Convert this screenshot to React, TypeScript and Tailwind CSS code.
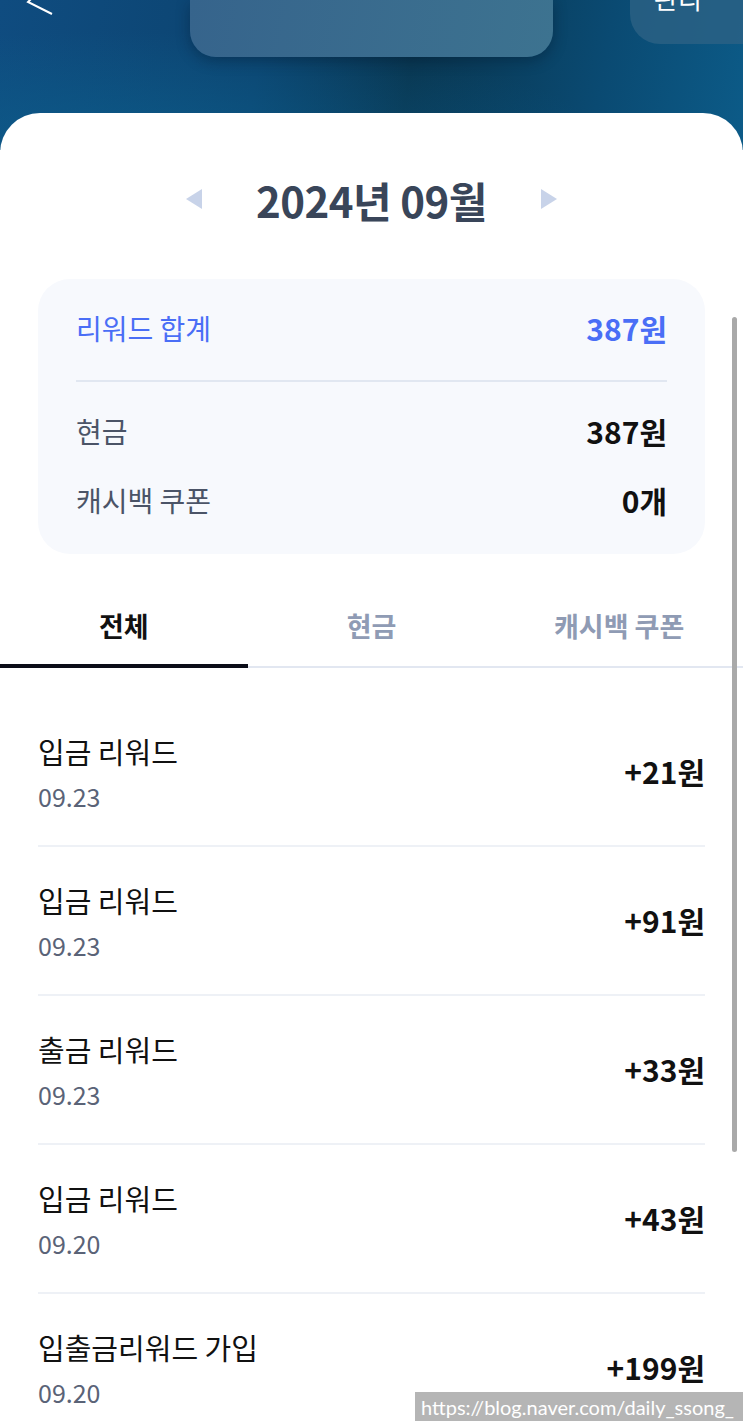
import React from 'react';

const rows = [
    { title: '입금 리워드', date: '09.23', amount: '+21원' },
    { title: '입금 리워드', date: '09.23', amount: '+91원' },
    { title: '출금 리워드', date: '09.23', amount: '+33원' },
    { title: '입금 리워드', date: '09.20', amount: '+43원' },
    { title: '입출금리워드 가입', date: '09.20', amount: '+199원' },
];

function Header() {
    return (
        <div className="relative h-[150px] -mb-[37px] overflow-hidden bg-[linear-gradient(100deg,#0f4c80_0%,#0c4470_35%,#093650_55%,#0a4a72_80%,#0c5b88_100%)]">
            <div className="absolute inset-0 bg-[radial-gradient(ellipse_at_15%_95%,rgba(12,95,140,0.7),transparent_55%)]"></div>
            {/* top cards */}
            <div className="absolute left-[190px] top-0 w-[363px] h-[57px] rounded-b-[26px] bg-[linear-gradient(100deg,#36648c,#3d7390)] shadow-[0_4px_14px_rgba(0,20,40,0.35)]"></div>
            <div className="absolute left-[630px] top-0 w-[140px] h-[44px] rounded-bl-[30px] bg-[#2c6184] opacity-80"></div>
            {/* back */}
            <svg className="absolute left-[20px] -top-[14px]" width="40" height="30" viewBox="0 0 40 30">
                <path d="M20 4 L8 16 L32 28" fill="none" stroke="white" strokeWidth="2" />
            </svg>
            <span className="absolute left-[654px] -top-[17px] text-white text-[26px] leading-[30px]">관리</span>
        </div>
    );
}

function App() {
    return (
        <div className="relative w-[743px] h-[1428px] overflow-hidden bg-white font-['Noto_Sans_CJK_KR',sans-serif]">
            <Header />
            <div className="relative bg-white rounded-t-[40px]">
                {/* month */}
                <div className="flex items-center justify-center gap-[54px] pt-[36px] h-[180px] pb-[44px]">
                    <svg width="16" height="20" viewBox="0 0 16 20"><path d="M16 0 L0 10 L16 20 Z" fill="#c8d3e9" /></svg>
                    <div className="text-[42px] font-bold text-[#394559] tracking-[-0.5px]">2024년 09월</div>
                    <svg width="16" height="20" viewBox="0 0 16 20"><path d="M0 0 L16 10 L0 20 Z" fill="#c8d3e9" /></svg>
                </div>

                {/* summary card */}
                <div className="mx-[38px] mt-[-14px] rounded-[32px] bg-[#f7f9fd] px-[38px] pt-[31px] pb-[36px]">
                    <div className="flex justify-between items-center h-[36px] text-[28px] text-[#4a6ef6]">
                        <span>리워드 합계</span>
                        <span className="font-bold text-[30px]">387원</span>
                    </div>
                    <div className="h-[2px] bg-[#e1e7f1] mt-[34px] mb-[31px]"></div>
                    <div className="flex justify-between items-center h-[36px] text-[28px]">
                        <span className="text-[#4b5467]">현금</span>
                        <span className="font-bold text-[30px] text-[#111]">387원</span>
                    </div>
                    <div className="flex justify-between items-center h-[36px] mt-[33px] text-[28px]">
                        <span className="text-[#4b5467]">캐시백 쿠폰</span>
                        <span className="font-bold text-[30px] text-[#111]">0개</span>
                    </div>
                </div>

                {/* tabs */}
                <div className="mt-[47px] flex border-b-2 border-[#e2e7f1] h-[67px]">
                    <div className="w-1/3 flex items-center justify-center pb-[12px] text-[27px] font-bold text-[#111] border-b-4 border-[#0b0d18] -mb-[2px]">전체</div>
                    <div className="w-1/3 flex items-center justify-center pb-[14px] text-[27px] font-bold text-[#8f9bb4]">현금</div>
                    <div className="w-1/3 flex items-center justify-center pb-[14px] text-[27px] font-bold text-[#8f9bb4]">캐시백 쿠폰</div>
                </div>

                {/* list */}
                <div className="mx-[38px] pt-[30px]">
                    {rows.map((r, i) => (
                        <div key={i} className="flex items-center justify-between h-[149px] border-b-2 border-[#eef1f6]">
                            <div className="flex flex-col">
                                <span className="text-[29px] leading-[36px] text-[#111]">{r.title}</span>
                                <span className="text-[25px] leading-[30px] mt-[12px] text-[#5a6377]">{r.date}</span>
                            </div>
                            <span className="text-[30px] font-bold text-[#111]">{r.amount}</span>
                        </div>
                    ))}
                </div>
            </div>

            {/* scrollbar */}
            <div className="absolute left-[732px] top-[317px] w-[5px] h-[835px] rounded-full bg-[#a9a9a9]"></div>

            {/* watermark */}
            <div className="absolute left-[415px] top-[1392px] w-[328px] h-[29px] bg-[#b5b5b5] flex items-center pl-[6px] text-white text-[20px] font-['Lato',sans-serif]">
                https://blog.naver.com/daily_ssong_
            </div>
        </div>
    );
}

export default App;
